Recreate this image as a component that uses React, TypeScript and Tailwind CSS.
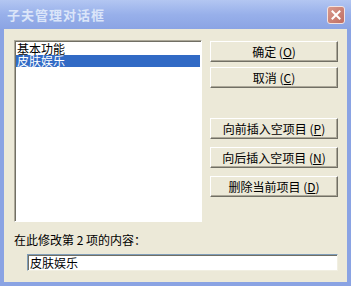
const font = { fontFamily: '"Noto Sans CJK SC", "Liberation Sans", sans-serif' };

const Btn = ({ label, hot, className = '' }: { label: string; hot: string; className?: string }) => (
  <div
    className={`h-[21px] w-[128px] flex items-center justify-center bg-[#ece9d8] border border-t-white border-l-white border-r-[#716f64] border-b-[#716f64] shadow-[inset_-1px_-1px_0_#aca899] text-[12px] leading-none text-black ${className}`}
  >
    <span>
      {label} (<span className="underline">{hot}</span>)
    </span>
  </div>
);

export default function App() {
  return (
    <div className="w-[351px] h-[286px] flex flex-col bg-[#8aa3e3]" style={font}>
      {/* title bar */}
      <div className="h-[29px] flex items-center justify-between pl-[7px] pr-[6px] bg-gradient-to-b from-[#b3c6f2] via-[#98b0ea] to-[#8ba4e4]">
        <span className="text-[13px] font-bold tracking-[1px] text-[#dbe5f9]">子夫管理对话框</span>
        <div className="w-[18px] h-[18px] rounded-[3px] border border-[#f3e3e0] bg-gradient-to-br from-[#d89a8e] to-[#c06e62] flex items-center justify-center">
          <svg width="10" height="10" viewBox="0 0 10 10">
            <path d="M1.5 1.5 L8.5 8.5 M8.5 1.5 L1.5 8.5" stroke="#ffffff" strokeWidth="2" strokeLinecap="square" />
          </svg>
        </div>
      </div>

      {/* client area */}
      <div className="flex-1 mx-[4px] mb-[4px] bg-[#ece9d8] flex flex-col pl-[10px] pr-[9px] pt-[11px]">
        <div className="flex gap-[8px]">
          {/* list box */}
          <div className="w-[188px] h-[182px] bg-white border border-t-[#aca899] border-l-[#aca899] border-r-white border-b-white shadow-[inset_1px_1px_0_#716f64] pt-[2px] pl-[1px] pr-[1px]">
            <div className="h-[12px] flex items-center text-[12px] leading-none text-black pl-[1px]">基本功能</div>
            <div className="h-[12px] flex items-center text-[12px] leading-none text-white bg-[#316ac5] pl-[1px]">皮肤娱乐</div>
          </div>

          {/* buttons */}
          <div className="flex flex-col pt-[1px]">
            <Btn label="确定" hot="O" />
            <Btn label="取消" hot="C" className="mt-[5px]" />
            <Btn label="向前插入空项目" hot="P" className="mt-[30px]" />
            <Btn label="向后插入空项目" hot="N" className="mt-[8px]" />
            <Btn label="删除当前项目" hot="D" className="mt-[8px]" />
          </div>
        </div>

        <div className="mt-[11px] text-[12px] leading-[14px] text-black">在此修改第 2 项的内容：</div>

        <div className="mt-[7px] ml-[13px] w-[311px] h-[17px] bg-white border border-t-[#7f9db9] border-l-[#7f9db9] border-r-[#f1efe2] border-b-[#f1efe2] shadow-[inset_1px_1px_0_#716f64] flex items-center pl-[2px] text-[12px] leading-none text-black">
          皮肤娱乐
        </div>
      </div>
    </div>
  );
}
